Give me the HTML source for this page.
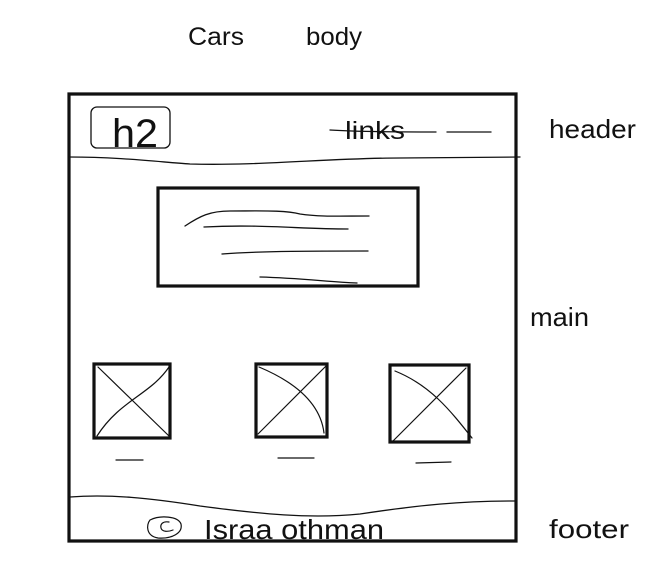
<!DOCTYPE html>
<html><head><meta charset="utf-8"><style>
html,body{margin:0;padding:0;background:#fff;width:668px;height:576px;overflow:hidden}
svg{display:block}
text{font-family:"Liberation Sans","DejaVu Sans",sans-serif;fill:#111}
</style></head><body>
<svg width="668" height="576" viewBox="0 0 668 576" xmlns="http://www.w3.org/2000/svg">
<g fill="none" stroke="#111" stroke-linecap="round">
<path d="M69 94 L516 94 L516 541 L69 541 Z" stroke-width="3.2"/>
<path d="M69 157 C120 157 160 162 190 164 C260 166 330 158 400 158 L520 157" stroke-width="1.3"/>
<rect x="91" y="107" width="79" height="41" rx="6" stroke-width="1.3"/>
<path d="M330 130 C360 132 400 132 436 132" stroke-width="1.3"/>
<path d="M447 132 L491 132" stroke-width="1.3"/>
<rect x="158" y="188" width="260" height="98" stroke-width="3.2"/>
<path d="M185 226 C200 216 210 211 230 211 C260 211 285 210 300 214 C320 217 340 216 369 216" stroke-width="1.3"/>
<path d="M204 227 C260 224 300 229 348 229" stroke-width="1.3"/>
<path d="M222 254 C260 251 320 251 368 251" stroke-width="1.3"/>
<path d="M260 277 C300 278 330 282 357 283" stroke-width="1.3"/>
<rect x="94" y="364" width="76" height="74" stroke-width="3.2"/>
<path d="M98 367 L169 436 M97 436 C120 400 150 395 169 367" stroke-width="1.2"/>
<rect x="256" y="364" width="71" height="73" stroke-width="3.2"/>
<path d="M259 367 C290 380 320 400 324 433 M258 434 L326 366" stroke-width="1.2"/>
<rect x="390" y="365" width="79" height="77" stroke-width="3.2"/>
<path d="M395 371 C430 385 450 410 472 438 M393 441 L466 368" stroke-width="1.2"/>
<path d="M116 460 L143 460 M278 458 L314 458 M416 463 L451 462" stroke-width="1.2"/>
<path d="M70 497 C110 494 150 498 200 506 C260 514 310 519 360 514 C420 505 460 501 516 501" stroke-width="1.3"/>
<path d="M150 520 C160 515 178 516 181 524 C183 533 172 539 158 538 C146 536 146 525 150 520 Z" stroke-width="1.2"/>
<path d="M169 522 C163 521 160 524 161 528 C162 532 168 532 173 530" stroke-width="1.2"/>
</g>
<text x="188" y="45" font-size="25" textLength="56" lengthAdjust="spacingAndGlyphs">Cars</text>
<text x="306" y="45" font-size="25" textLength="56" lengthAdjust="spacingAndGlyphs">body</text>
<text x="112" y="147" font-size="40" textLength="46" lengthAdjust="spacingAndGlyphs">h2</text>
<text x="345" y="139" font-size="25" textLength="60" lengthAdjust="spacingAndGlyphs">links</text>
<text x="549" y="138" font-size="26" textLength="87" lengthAdjust="spacingAndGlyphs">header</text>
<text x="530" y="326" font-size="26" textLength="59" lengthAdjust="spacingAndGlyphs">main</text>
<text x="549" y="538" font-size="26" textLength="80" lengthAdjust="spacingAndGlyphs">footer</text>
<text x="204" y="539" font-size="28" textLength="180" lengthAdjust="spacingAndGlyphs">Israa othman</text>
</svg>
</body></html>
